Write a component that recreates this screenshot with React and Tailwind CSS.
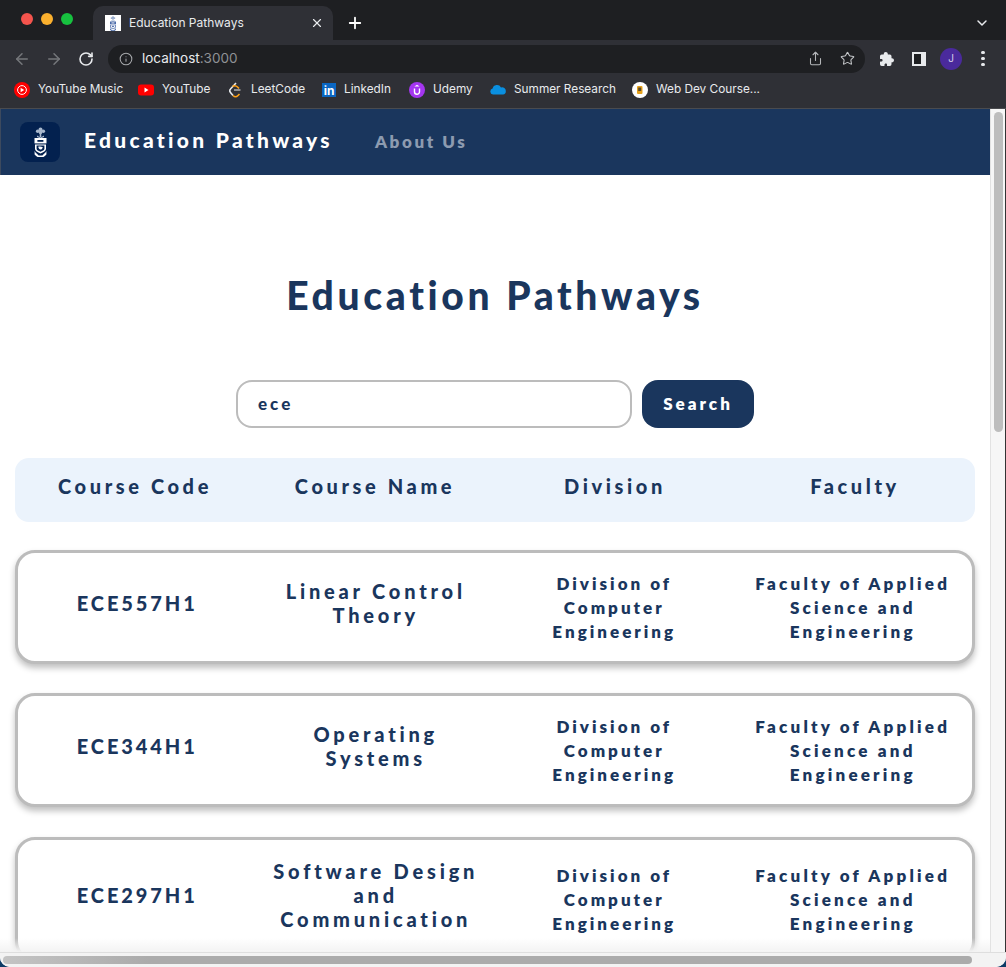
import React from "react";
import { ArrowLeft, ArrowRight, RotateCw, Info, Star, ChevronDown, Plus, X, Share } from "lucide-react";
import { IoExtensionPuzzle } from "react-icons/io5";

const Crest = ({ className, main = "#ffffff", soft = "#a9b8cc", bg = "#03214f" }) => (
  <svg viewBox="0 0 13 30" className={className}>
    <circle cx="6.5" cy="2.4" r="2" fill={soft} />
    <circle cx="3.6" cy="4.2" r="1.7" fill={soft} />
    <circle cx="9.4" cy="4.2" r="1.7" fill={soft} />
    <circle cx="6.5" cy="5.4" r="1.8" fill={soft} />
    <rect x="5.7" y="6.5" width="1.6" height="3.5" fill={soft} />
    <path d="M3 8.5l3.5 2 3.5-2v1.5l-3.5 1.4L3 10z" fill={soft} />
    <rect x="0.5" y="11" width="12" height="5.4" fill={main} />
    <rect x="3.4" y="13" width="6" height="1.8" fill={bg} />
    <path d="M1 17.4h11v4.6c0 2-2.6 3-5.5 4.4C3.6 25 1 24 1 22z" fill={main} />
    <path d="M2.6 18.6h7.8v3.2c0 1.3-1.9 2.1-3.9 3-2-0.9-3.9-1.7-3.9-3z" fill={bg} />
    <path d="M4.2 19.8c1.5-.7 3-.4 4.6.4-.4 1.6-1.4 2.4-2.3 2.4-1.1 0-2-1.2-2.3-2.8z" fill={main} />
    <path d="M0.6 24c1 2 3 3.4 4 4.4h3.8c1-1 3-2.4 4-4.4v3.6c-1 1.2-2 2-3 2.4H3.600c-1-.4-2-1.200-3-2.400z" fill={main} />
  </svg>
);

const Bookmark = ({ icon, label, className }) => (
  <div className={`flex items-center gap-[8px] ${className || ""}`}>
    {icon}
    <span className="text-[11.8px] leading-none text-[#e8eaed] whitespace-nowrap">{label}</span>
  </div>
);

const rows = [
  { code: "ECE557H1", name: "Linear Control Theory", h: "h-[114px]" },
  { code: "ECE344H1", name: "Operating Systems", h: "h-[114px] mb-[1px]" },
  { code: "ECE297H1", name: "Software Design and Communication", h: "h-[124px]" },
];

const Row = ({ code, name, h }) => (
  <div className={`grid grid-cols-4 ${h} shrink-0 items-center rounded-[20px] border-[3px] border-[#bcbcbc] bg-white text-center text-[#1a365d] shadow-[0_4px_6px_rgba(0,0,0,0.25)]`}>
    <div className="pb-[8px] text-[20px] font-black tracking-[2.9px]">{code}</div>
    <div className="px-[15px] pb-[8px] text-[20px] leading-[24px] font-black tracking-[3.8px]">{name}</div>
    <div className="px-[30px] pt-[1px] text-[17px] leading-[24px] font-extrabold tracking-[3px]">
      Division of Computer Engineering
    </div>
    <div className="px-[5px] pt-[1px] text-[17px] leading-[24px] font-extrabold tracking-[3.2px]">
      Faculty of Applied Science and Engineering
    </div>
  </div>
);

export default function App() {
  return (
    <div className="h-[967px] w-[1006px] overflow-hidden bg-[#0d3b66]">
      <div className="flex h-[967px] w-[1006px] flex-col overflow-hidden rounded-b-[10px] bg-white font-['Lato',sans-serif]">
        {/* browser chrome */}
        <div className="flex h-[109px] shrink-0 flex-col border-b border-[#4a4b4f] font-['Inter',sans-serif]">
          <div className="flex h-[40px] items-end bg-[#1e1f22]">
            <div className="flex h-[40px] w-[93px] shrink-0 items-center gap-[8px] pb-[3px] pl-[21px]">
              <span className="h-[12px] w-[12px] rounded-full bg-[#f4544d]" />
              <span className="h-[12px] w-[12px] rounded-full bg-[#fbb02e]" />
              <span className="h-[12px] w-[12px] rounded-full bg-[#17c13f]" />
            </div>
            <div className="flex h-[34px] w-[240px] shrink-0 items-center rounded-t-[10px] bg-[#2f3036] pl-[12px] pr-[9px]">
              <div className="flex h-[16px] w-[16px] items-center justify-center bg-white">
                <Crest className="h-[15px] w-[8px]" main="#4a6aa8" soft="#8fa3c8" bg="#ffffff" />
              </div>
              <span className="ml-[8px] flex-1 text-[12px] text-[#e8eaed]">Education Pathways</span>
              <X size={14} strokeWidth={2} color="#e8eaed" />
            </div>
            <div className="ml-[13px] flex h-[34px] items-center">
              <Plus size={18} strokeWidth={2.4} color="#ffffff" />
            </div>
            <div className="ml-auto flex h-[34px] items-center pr-[16px]">
              <ChevronDown size={16} strokeWidth={2.2} color="#e8eaed" />
            </div>
          </div>
          <div className="flex h-[37px] items-center bg-[#2f3036]">
            <div className="flex w-[108px] shrink-0 items-center pl-[13px]">
              <ArrowLeft size={18} strokeWidth={2} color="#75777b" />
              <ArrowRight size={18} strokeWidth={2} color="#75777b" className="ml-[14px]" />
              <RotateCw size={16} strokeWidth={2.4} color="#e8eaed" className="ml-[15px]" />
            </div>
            <div className="flex h-[28px] w-[757px] items-center rounded-full bg-[#1e1f22] pl-[11px] pr-[10px]">
              <Info size={14} strokeWidth={1.8} color="#a6a8ab" />
              <span className="ml-[9px] text-[13.5px] text-[#e8eaed]">localhost<span className="text-[#8f9195]">:3000</span></span>
              <Share size={15} strokeWidth={1.7} color="#b4b6b9" className="ml-auto mr-[17px]" />
              <Star size={15} strokeWidth={1.7} color="#c4c6c9" />
            </div>
            <IoExtensionPuzzle size={16} color="#e8eaed" className="ml-[14px]" />
            <div className="ml-[17px] h-[14px] w-[14px] border-[2px] border-r-[5px] border-[#e8eaed] bg-[#1e1f22]" />
            <div className="ml-[14px] flex h-[22px] w-[22px] items-center justify-center rounded-full bg-[#4a2a9c] text-[10px] text-[#d5cfe8]">J</div>
            <div className="ml-[19px] flex flex-col gap-[2.5px]">
              <span className="h-[3.5px] w-[3.5px] rounded-full bg-[#e8eaed]" />
              <span className="h-[3.5px] w-[3.5px] rounded-full bg-[#e8eaed]" />
              <span className="h-[3.5px] w-[3.5px] rounded-full bg-[#e8eaed]" />
            </div>
          </div>
          <div className="flex flex-1 items-center bg-[#2f3036] pb-[6px] pl-[14px]">
            <Bookmark
              label="YouTube Music"
              className="w-[124px]"
              icon={
                <svg viewBox="0 0 16 16" className="h-[16px] w-[16px]">
                  <circle cx="8" cy="8" r="8" fill="#ff0000" />
                  <circle cx="8" cy="8" r="4.4" fill="none" stroke="#fff" strokeWidth="1" />
                  <path d="M6.600 5.800v4.400L10.200 8z" fill="#fff" />
                </svg>
              }
            />
            <Bookmark
              label="YouTube"
              className="w-[89px]"
              icon={
                <svg viewBox="0 0 16 12" className="h-[12px] w-[16px]">
                  <rect width="16" height="11" y="0.5" rx="3" fill="#ff0000" />
                  <path d="M6.500 3.500v5L10.500 6z" fill="#fff" />
                </svg>
              }
            />
            <Bookmark
              label="LeetCode"
              className="w-[95px]"
              icon={
                <svg viewBox="0 0 16 16" className="h-[16px] w-[16px]" fill="none" strokeWidth="1.6">
                  <path d="M9 1L3.500 7c-1 1-1 2.500 0 3.500l2.500 3" stroke="#e8eaed" />
                  <path d="M7 8h6.500" stroke="#a8a8a8" />
                  <path d="M6 13.500c1.500 1.500 3.500 1.500 5 0l1.500-1.500" stroke="#ffa116" />
                  <path d="M5.500 4.500c1.500-1 3.500-1 5 .5l1.500 1.500" stroke="#ffa116" />
                </svg>
              }
            />
            <Bookmark
              label="LinkedIn"
              className="w-[87px]"
              icon={
                <span className="flex h-[14px] w-[14px] items-end justify-center bg-[#0a66c2] text-[12px] leading-[13px] font-bold text-white">in</span>
              }
            />
            <Bookmark
              label="Udemy"
              className="w-[81px]"
              icon={
                <svg viewBox="0 0 16 16" className="h-[16px] w-[16px]">
                  <circle cx="8" cy="8" r="8" fill="#a435f0" />
                  <path d="M5.500 6.500v3.200a2.500 2.500 0 0 0 5 0V6.500" fill="none" stroke="#fff" strokeWidth="1.4" />
                  <path d="M8 2.800l2.600 1.600H5.400z" fill="#fff" />
                </svg>
              }
            />
            <Bookmark
              label="Summer Research"
              className="w-[142px]"
              icon={
                <svg viewBox="0 0 16 11" className="h-[11px] w-[16px]">
                  <path d="M3 10.500a3 3 0 0 1-.4-5.900A4.500 4.500 0 0 1 11 3.400a3.600 3.600 0 0 1 4.800 3.600A3.300 3.300 0 0 1 13 10.500z" fill="#0a8fe0" />
                </svg>
              }
            />
            <Bookmark
              label="Web Dev Course..."
              icon={
                <svg viewBox="0 0 16 16" className="h-[16px] w-[16px]">
                  <circle cx="8" cy="8" r="8" fill="#fff" />
                  <rect x="5" y="4" width="5.500" height="8" rx="1" fill="#e5a11c" />
                  <rect x="6.200" y="5.500" width="3" height="3.500" fill="#5a4a2a" />
                </svg>
              }
            />
          </div>
        </div>

        {/* viewport */}
        <div className="flex min-h-0 flex-1">
          <main className="relative min-w-0 flex-1 overflow-hidden">
            <nav className="flex h-[66px] items-center bg-[#1a365d] pl-[20px] shadow-[inset_1px_0_0_#3d4a5e]">
              <div className="flex h-[40px] w-[40px] items-center justify-center rounded-[8px] bg-[#03214f]">
                <Crest className="h-[30px] w-[13px]" />
              </div>
              <span className="ml-[24px] pb-[4px] text-[21px] font-black tracking-[3.3px] text-white">Education Pathways</span>
              <span className="ml-[42px] text-[17px] font-extrabold tracking-[2.6px] text-[#8d9bb0]">About Us</span>
            </nav>
            <h1 className="mt-[93px] text-center text-[39px] leading-[54px] font-black tracking-[3.65px] text-[#1a365d]">Education Pathways</h1>
            <div className="mt-[58px] flex justify-center gap-[10px]">
              <div className="flex h-[48px] w-[396px] items-center rounded-[16px] border-[2px] border-[#bcbcbc] bg-white pl-[20px] text-[17px] font-black tracking-[3px] text-[#1a365d]">ece</div>
              <button className="h-[48px] w-[112px] rounded-[16px] bg-[#1a365d] text-[17px] font-extrabold tracking-[3px] text-white">Search</button>
            </div>
            <div className="mx-[15px] mt-[30px] grid h-[64px] grid-cols-4 items-center rounded-[14px] bg-[#ebf3fc] pb-[9px] text-center text-[20px] font-black tracking-[3.6px] text-[#1a365d]">
              <div>Course Code</div>
              <div>Course Name</div>
              <div>Division</div>
              <div>Faculty</div>
            </div>
            <div className="mx-[15px] mt-[28px] flex flex-col gap-[29px]">
              {rows.map((r) => (
                <Row key={r.code} {...r} />
              ))}
            </div>
            <div className="absolute bottom-0 left-0 right-0 h-[14px] bg-gradient-to-b from-transparent to-[#f3f3f3]" />
          </main>
          {/* vertical scrollbar */}
          <div className="flex w-[16px] shrink-0 justify-center border-x border-r-[#333333] border-l-[#e2e2e2] bg-[#f6f6f6] pt-[3px]">
            <div className="h-[320px] w-[9px] rounded-full bg-[#bdbdbd]" />
          </div>
        </div>
        {/* horizontal scrollbar */}
        <div className="flex h-[15px] shrink-0 items-center border-t border-[#dedede] bg-[#f3f3f3] pl-[3px] pr-[34px]">
          <div className="h-[8px] w-full rounded-full bg-gradient-to-r from-[#c4c4c4] to-[#ababab] to-[15%]" />
        </div>
      </div>
    </div>
  );
}
